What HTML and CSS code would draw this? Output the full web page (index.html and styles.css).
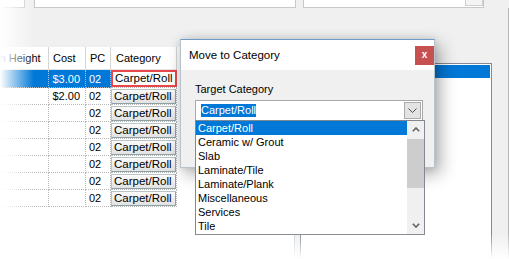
FILE: index.html
```html
<!DOCTYPE html>
<html lang="en">
<head>
    <meta charset="UTF-8">
    <title>Move to Category</title>
    <link rel="stylesheet" href="styles.css">
</head>
<body>
    <div class="screen">
        <div class="toolbar">
            <div class="field field-a"></div>
            <div class="field field-b"></div>
            <div class="field field-c"><span class="field-btn"></span></div>
        </div>

        <div class="work">
            <div class="grid-pane">
                <div class="grid-box">
                    <table class="grid">
                        <colgroup>
                            <col class="c-height">
                            <col class="c-cost">
                            <col class="c-pc">
                            <col class="c-cat">
                        </colgroup>
                        <thead>
                            <tr>
                                <th>Min Height</th>
                                <th>Cost</th>
                                <th>PC</th>
                                <th class="th-cat">Category</th>
                            </tr>
                        </thead>
                        <tbody>
                            <tr class="selected">
                                <td></td>
                                <td class="num">$3.00</td>
                                <td>02</td>
                                <td class="cat"><div class="cat-current">Carpet/Roll</div></td>
                            </tr>
                            <tr>
                                <td></td>
                                <td class="num">$2.00</td>
                                <td>02</td>
                                <td class="cat"><div class="cat-btn">Carpet/Roll</div></td>
                            </tr>
                            <tr>
                                <td></td><td class="num"></td><td>02</td>
                                <td class="cat"><div class="cat-btn">Carpet/Roll</div></td>
                            </tr>
                            <tr>
                                <td></td><td class="num"></td><td>02</td>
                                <td class="cat"><div class="cat-btn">Carpet/Roll</div></td>
                            </tr>
                            <tr>
                                <td></td><td class="num"></td><td>02</td>
                                <td class="cat"><div class="cat-btn">Carpet/Roll</div></td>
                            </tr>
                            <tr>
                                <td></td><td class="num"></td><td>02</td>
                                <td class="cat"><div class="cat-btn">Carpet/Roll</div></td>
                            </tr>
                            <tr>
                                <td></td><td class="num"></td><td>02</td>
                                <td class="cat"><div class="cat-btn">Carpet/Roll</div></td>
                            </tr>
                            <tr>
                                <td></td><td class="num"></td><td>02</td>
                                <td class="cat"><div class="cat-btn">Carpet/Roll</div></td>
                            </tr>
                        </tbody>
                    </table>
                </div>
            </div>

            <div class="list-pane">
                <div class="listbox">
                    <div class="listbox-sel"></div>
                </div>
            </div>

            <div class="side-pane"></div>
        </div>

        <!-- modal dialog on top of the form -->
        <div class="dialog">
            <div class="dlg-title">
                <span>Move to Category</span>
                <span class="dlg-close">x</span>
            </div>
            <div class="dlg-body">
                <div class="dlg-label">Target Category</div>
                <div class="combo">
                    <span class="combo-text">Carpet/Roll</span>
                    <span class="combo-btn">
                        <svg width="9" height="5" viewBox="0 0 9 5"><polyline points="0.5,0.5 4.5,4.5 8.5,0.5" fill="none" stroke="#505050" stroke-width="1"/></svg>
                    </span>
                </div>
            </div>
        </div>

        <div class="droplist">
            <ul class="drop-items">
                <li class="active">Carpet/Roll</li>
                <li>Ceramic w/ Grout</li>
                <li>Slab</li>
                <li>Laminate/Tile</li>
                <li>Laminate/Plank</li>
                <li>Miscellaneous</li>
                <li>Services</li>
                <li>Tile</li>
            </ul>
            <div class="vscroll">
                <span class="arrow">
                    <svg width="8" height="5" viewBox="0 0 8 5"><polyline points="0.8,4.2 4,1 7.2,4.2" fill="none" stroke="#606060" stroke-width="1.6"/></svg>
                </span>
                <span class="thumb"></span>
                <span class="arrow arrow-down">
                    <svg width="8" height="5" viewBox="0 0 8 5"><polyline points="0.8,0.8 4,4 7.2,0.8" fill="none" stroke="#606060" stroke-width="1.6"/></svg>
                </span>
            </div>
        </div>

        <div class="fade"></div>
    </div>
</body>
</html>
```

FILE: styles.css
```css
* {
    box-sizing: border-box;
}
body {
    margin: 0;
    background: #fff;
    font-family: "Liberation Sans", Arial, sans-serif;
    font-size: 11px;
    color: #000;
}
.screen {
    position: relative;
    width: 509px;
    height: 259px;
    overflow: hidden;
    background: #f0f0f0;
}

/* top row of inputs (cut off by the screenshot) */
.toolbar {
    display: flex;
    height: 8px;
}
.field {
    height: 8px;
    background: #fff;
    border: 1px solid #c8c8c8;
    border-top: none;
}
.field-a { width: 26px; margin-left: -1px; }
.field-b { width: 262px; margin-left: 9px; }
.field-c { width: 181px; margin-left: 7px; display: flex; justify-content: flex-end; }
.field-btn {
    width: 18px;
    height: 6px;
    border: 1px solid #d0d0d0;
    border-top: none;
    background: #f4f4f4;
}

.work {
    display: flex;
    height: 251px;
}
.grid-pane {
    width: 295px;
    margin-right: 5px;
    padding-top: 39px;
    display: flex;
    flex-direction: column;
}
.grid-box {
    flex: 1;
    background: #fff;
    border-right: 1px solid #c9d2de;
    overflow: hidden;
}

/* data grid */
.grid {
    margin-left: -16px;
    table-layout: fixed;
    border-collapse: separate;
    border-spacing: 0;
    width: 193px;
}
.c-height { width: 65px; }
.c-cost { width: 37px; }
.c-pc { width: 25px; }
.c-cat { width: 66px; }
.grid th {
    height: 23px;
    padding: 0 0 0 4px;
    font-weight: normal;
    text-align: left;
    white-space: nowrap;
    overflow: hidden;
    background: #fff;
    border-right: 1px solid #d5d5d5;
    border-bottom: 1px solid #e4e4e4;
}
.grid th.th-cat { padding-left: 5px; }
.grid td {
    height: 17px;
    padding: 0 0 0 3px;
    white-space: nowrap;
    border-right: 1px dotted #b8b8b8;
    border-bottom: 1px dotted #b8b8b8;
}
.grid td.num {
    text-align: right;
    padding: 0 5px 0 0;
}
.grid td.cat {
    padding: 1px 0 0 0;
    vertical-align: top;
}
.selected td {
    background: #0078d7;
    color: #fff;
    border-right-color: #9cc6ea;
}
.selected td.cat {
    background: #fff;
    padding: 0;
}
.cat-current {
    height: 17px;
    line-height: 13px;
    padding-left: 2px;
    margin-right: -1px;
    border: 2px solid #e9474c;
    color: #000;
    font-size: 11.5px;
}
.cat-btn {
    height: 15px;
    line-height: 13px;
    padding-left: 2px;
    font-size: 11.5px;
    border: 1px solid #b9c4c6;
    border-right-color: #8fa3a6;
    border-bottom-color: #8fa3a6;
    background: linear-gradient(#fbfbfb, #e2e2e2);
}

/* listbox behind the dialog */
.list-pane {
    width: 192px;
    padding-top: 55px;
    display: flex;
    flex-direction: column;
}
.listbox {
    flex: 1;
    background: #fff;
    border: 1px solid #858a92;
    border-bottom: none;
    padding: 1px 1px 0 1px;
}
.listbox-sel {
    height: 13px;
    background: #0078d7;
}
.side-pane {
    flex: 1;
    border-right: 1px solid #b6b6b6;
}

/* dialog */
.dialog {
    position: absolute;
    left: 180px;
    top: 39px;
    width: 255px;
    height: 129px;
    background: #f0f0f0;
    border: 1px solid #b9c3cc;
    border-top-color: #6a9cc8;
    box-shadow: 5px 6px 16px rgba(0, 0, 0, 0.32), 0 0 8px rgba(0, 0, 0, 0.12);
    display: flex;
    flex-direction: column;
}
.dlg-title {
    height: 30px;
    background: #fff;
    display: flex;
    align-items: center;
    justify-content: space-between;
    padding-left: 8px;
    font-size: 11.5px;
}
.dlg-close {
    width: 19px;
    height: 19px;
    background: #c75050;
    color: #fff;
    font-weight: bold;
    font-size: 10px;
    line-height: 17px;
    text-align: center;
}
.dlg-body {
    padding: 13px 0 0 14px;
}
.dlg-label {
    line-height: 13px;
    margin-bottom: 4px;
}
.combo {
    width: 228px;
    height: 21px;
    background: #fff;
    border: 1px solid #a8a8a8;
    display: flex;
    align-items: center;
    justify-content: space-between;
    padding-left: 5px;
}
.combo-text {
    background: #0078d7;
    color: #fff;
    line-height: 13px;
}
.combo-btn {
    width: 17px;
    height: 17px;
    margin-right: 1px;
    background: #e3e3e3;
    border: 1px solid #acacac;
    display: flex;
    align-items: center;
    justify-content: center;
}

/* open dropdown list */
.droplist {
    position: absolute;
    left: 195px;
    top: 120px;
    width: 230px;
    height: 115px;
    background: #fff;
    border: 1px solid #828790;
    display: flex;
}
.drop-items {
    flex: 1;
    margin: 0;
    padding: 0;
    list-style: none;
}
.drop-items li {
    height: 14px;
    line-height: 14px;
    padding-left: 2px;
    white-space: nowrap;
}
.drop-items li.active {
    background: #0078d7;
    color: #fff;
}
.vscroll {
    width: 17px;
    background: #f0f0f0;
    display: flex;
    flex-direction: column;
}
.arrow {
    height: 17px;
    display: flex;
    align-items: center;
    justify-content: center;
}
.arrow-down {
    margin-top: auto;
}
.thumb {
    height: 49px;
    margin-top: 1px;
    background: #cdcdcd;
}

/* faded edges of the screenshot */
.fade {
    position: absolute;
    inset: 0;
    pointer-events: none;
    background:
        linear-gradient(to right, #fff 0, rgba(255, 255, 255, 0) 34px),
        linear-gradient(to top, #fff 0, rgba(255, 255, 255, 0) 26px);
}
```
